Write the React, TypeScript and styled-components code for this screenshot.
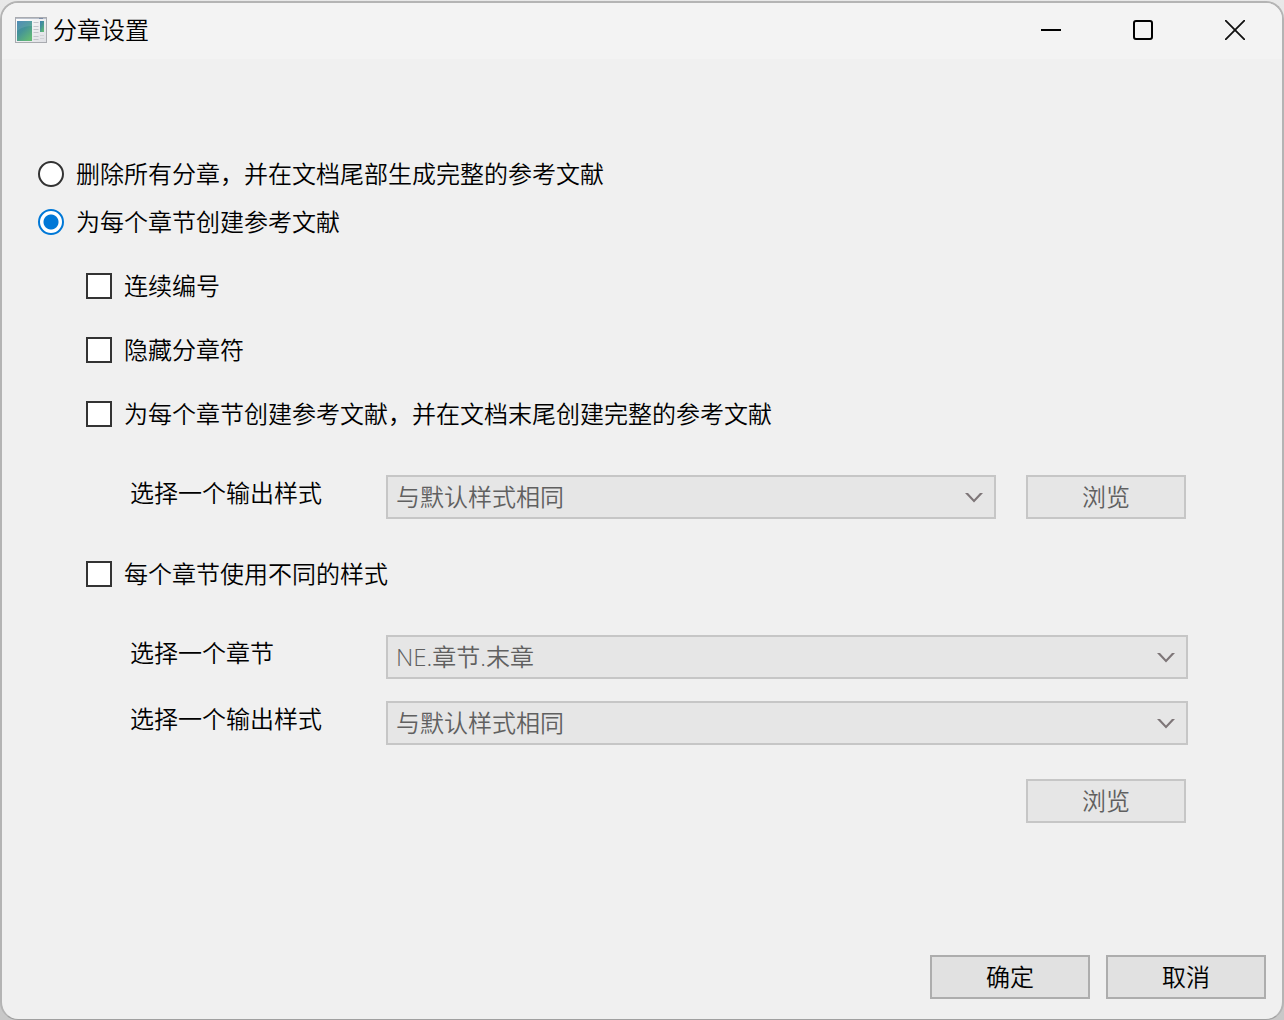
import React, { useId, useState } from "react";
import styled, { createGlobalStyle } from "styled-components";

const uiFont = `"Open Sans", "Noto Sans CJK SC", sans-serif`;

const GlobalStyle = createGlobalStyle`
  *, *::before, *::after { box-sizing: border-box; }
  body {
    margin: 0;
    background: linear-gradient(#e8e8e8, #c8c8c8);
    font-family: ${uiFont};
    font-size: 24px;
    font-weight: 350;
    line-height: 32px;
    color: #000;
  }
  button, input, select { font: inherit; color: inherit; }
`;

const Page = styled.div`
  display: flex;
  min-height: 100vh;
  padding-top: 1px;
`;

const Dialog = styled.form`
  flex: 1;
  display: flex;
  flex-direction: column;
  min-width: 0;
  border: 2px solid #b4b4b4;
  border-bottom: 1px solid #a0a0a0;
  border-radius: 18px;
  background: #f0f0f0;
  overflow: hidden;
`;

const TitleBar = styled.header`
  display: flex;
  align-items: center;
  height: 56px;
  padding: 0 1px 2px 13px;
  background: #f3f3f3;
`;

const Title = styled.h1`
  flex: 1;
  margin: 0 0 0 6px;
  font-size: 24px;
  font-weight: inherit;
`;

const CaptionButton = styled.button`
  display: flex;
  align-items: center;
  justify-content: center;
  width: 92px;
  height: 54px;
  padding: 0;
  border: 0;
  background: transparent;
  &:hover { background: #e5e5e5; }
`;

const Body = styled.main`
  flex: 1;
  padding: 91px 94px 24px 36px;
`;

const Modes = styled.div`
  padding-bottom: 8px;
`;

const Choice = styled.label<{ $nested?: boolean }>`
  display: flex;
  align-items: center;
  gap: 12px;
  height: ${(p) => (p.$nested ? 64 : 48)}px;
  margin-left: ${(p) => (p.$nested ? 48 : 0)}px;
`;

const Radio = styled.input`
  appearance: none;
  flex: none;
  width: 26px;
  height: 26px;
  margin: 0;
  border: 2px solid #333;
  border-radius: 50%;
  background: #fff;
  &:checked {
    border-color: #0078d7;
    background: radial-gradient(circle, #0078d7 7px, #fff 8px);
  }
`;

const Check = styled.input`
  appearance: none;
  flex: none;
  width: 26px;
  height: 26px;
  margin: 0;
  border: 2px solid #333;
  background: #fff;
  &:checked { box-shadow: inset 0 0 0 4px #fff; background: #333; }
`;

const Fields = styled.div`
  display: grid;
  gap: 22px;
  padding: 29px 0 23px 92px;
`;

const Field = styled.div`
  display: grid;
  grid-template-columns: 256px 1fr auto;
  align-items: start;
`;

const FieldLabel = styled.label`
  line-height: 36px;
`;

const SelectBox = styled.div`
  position: relative;
  height: 44px;
`;

const Select = styled.select`
  appearance: none;
  display: block;
  width: 100%;
  height: 44px;
  padding: 0 44px 0 8px;
  border: 2px solid #adadad;
  border-radius: 0;
  background: #e1e1e1;
  &:disabled {
    opacity: 1;
    border-color: #c6c6c6;
    background: #e6e6e6;
    color: #606060;
  }
`;

const Arrow = styled.svg`
  position: absolute;
  top: 17px;
  right: 12px;
  pointer-events: none;
`;

const Button = styled.button`
  width: 160px;
  height: 44px;
  padding: 0;
  border: 2px solid #adadad;
  background: #e1e1e1;
  &:disabled {
    border-color: #c6c6c6;
    background: #e6e6e6;
    color: #606060;
  }
`;

const BrowseCell = styled.div`
  padding: 0 2px 0 30px;
`;

const BrowseRow = styled.div`
  display: flex;
  justify-content: flex-end;
  padding: 12px 2px 0 0;
`;

const Footer = styled.footer`
  display: flex;
  justify-content: flex-end;
  gap: 16px;
  padding: 0 16px 20px;
`;

function AppIcon() {
  return (
    <svg width="32" height="26" viewBox="0 0 32 26" aria-hidden="true">
      <defs>
        <linearGradient id="pane" x1="0" y1="0" x2="0.7" y2="1">
          <stop offset="0" stopColor="#3d7fb0" />
          <stop offset="0.5" stopColor="#459497" />
          <stop offset="1" stopColor="#62b876" />
        </linearGradient>
        <linearGradient id="sheet" x1="0" y1="0" x2="1" y2="1">
          <stop offset="0" stopColor="#ffffff" />
          <stop offset="1" stopColor="#dedfe3" />
        </linearGradient>
      </defs>
      <rect x="0.5" y="0.5" width="31" height="25" fill="url(#sheet)" stroke="#a9abb0" />
      <path d="M1 1.5h30" stroke="#b9c0cb" />
      <path d="M24 1.5h4" stroke="#7e8da8" />
      <rect x="2" y="4" width="15" height="20" fill="url(#pane)" />
      <path d="M2 14C7 10 12 9 17 9V4H2z" fill="#fff" opacity="0.1" />
      <path d="M18.5 5.5h5M18.5 9.5h5M18.5 12.5h5M18.5 15.5h5M18.5 19.5h5M18.5 22.5h5" stroke="#c3c5ca" />
      <rect x="25" y="4" width="4" height="11" fill="url(#pane)" />
      <path d="M25 18.5h4M25 21.5h4" stroke="#d0d1d5" />
    </svg>
  );
}

type DropDownProps = { label: string; value: string; disabled: boolean; children?: React.ReactNode };

function DropDown({ label, value, disabled, children }: DropDownProps) {
  const id = useId();
  return (
    <Field>
      <FieldLabel htmlFor={id}>{label}</FieldLabel>
      <SelectBox>
        <Select id={id} disabled={disabled}>
          <option>{value}</option>
        </Select>
        <Arrow width="20" height="12" viewBox="0 0 20 12" aria-hidden="true">
          <path d="M1 1h3l6 6.4L16 1h3l-9 9.6z" fill="#7e7678" />
        </Arrow>
      </SelectBox>
      {children}
    </Field>
  );
}

type CheckItemProps = { text: string; checked: boolean; onChange: (on: boolean) => void };

function CheckItem({ text, checked, onChange }: CheckItemProps) {
  return (
    <Choice $nested>
      <Check type="checkbox" checked={checked} onChange={(e) => onChange(e.target.checked)} />
      {text}
    </Choice>
  );
}

export default function App() {
  const [mode, setMode] = useState("each");
  const [continuous, setContinuous] = useState(false);
  const [hidden, setHidden] = useState(false);
  const [complete, setComplete] = useState(false);
  const [different, setDifferent] = useState(false);

  return (
    <>
      <GlobalStyle />
      <Page>
        <Dialog onSubmit={(e) => e.preventDefault()}>
          <TitleBar>
            <AppIcon />
            <Title>分章设置</Title>
            <CaptionButton type="button" aria-label="最小化">
              <svg width="20" height="20" viewBox="0 0 20 20">
                <path d="M0 10h20" stroke="#000" strokeWidth="2" />
              </svg>
            </CaptionButton>
            <CaptionButton type="button" aria-label="最大化">
              <svg width="20" height="20" viewBox="0 0 20 20">
                <rect x="1" y="1" width="18" height="18" rx="2" fill="none" stroke="#000" strokeWidth="2" />
              </svg>
            </CaptionButton>
            <CaptionButton type="button" aria-label="关闭">
              <svg width="20" height="20" viewBox="0 0 20 20">
                <path d="M.7.7l18.6 18.6M19.3.7L.7 19.3" stroke="#111" strokeWidth="1.8" strokeLinecap="round" />
              </svg>
            </CaptionButton>
          </TitleBar>
          <Body>
            <Modes>
              <Choice>
                <Radio type="radio" name="mode" checked={mode === "end"} onChange={() => setMode("end")} />
                删除所有分章，并在文档尾部生成完整的参考文献
              </Choice>
              <Choice>
                <Radio type="radio" name="mode" checked={mode === "each"} onChange={() => setMode("each")} />
                为每个章节创建参考文献
              </Choice>
            </Modes>
            <CheckItem text="连续编号" checked={continuous} onChange={setContinuous} />
            <CheckItem text="隐藏分章符" checked={hidden} onChange={setHidden} />
            <CheckItem
              text="为每个章节创建参考文献，并在文档末尾创建完整的参考文献"
              checked={complete}
              onChange={setComplete}
            />
            <Fields>
              <DropDown label="选择一个输出样式" value="与默认样式相同" disabled={!complete}>
                <BrowseCell>
                  <Button type="button" disabled={!complete}>浏览</Button>
                </BrowseCell>
              </DropDown>
            </Fields>
            <CheckItem text="每个章节使用不同的样式" checked={different} onChange={setDifferent} />
            <Fields>
              <DropDown label="选择一个章节" value="NE.章节.末章" disabled={!different} />
              <DropDown label="选择一个输出样式" value="与默认样式相同" disabled={!different} />
              <BrowseRow>
                <Button type="button" disabled={!different}>浏览</Button>
              </BrowseRow>
            </Fields>
          </Body>
          <Footer>
            <Button type="submit">确定</Button>
            <Button type="button">取消</Button>
          </Footer>
        </Dialog>
      </Page>
    </>
  );
}
